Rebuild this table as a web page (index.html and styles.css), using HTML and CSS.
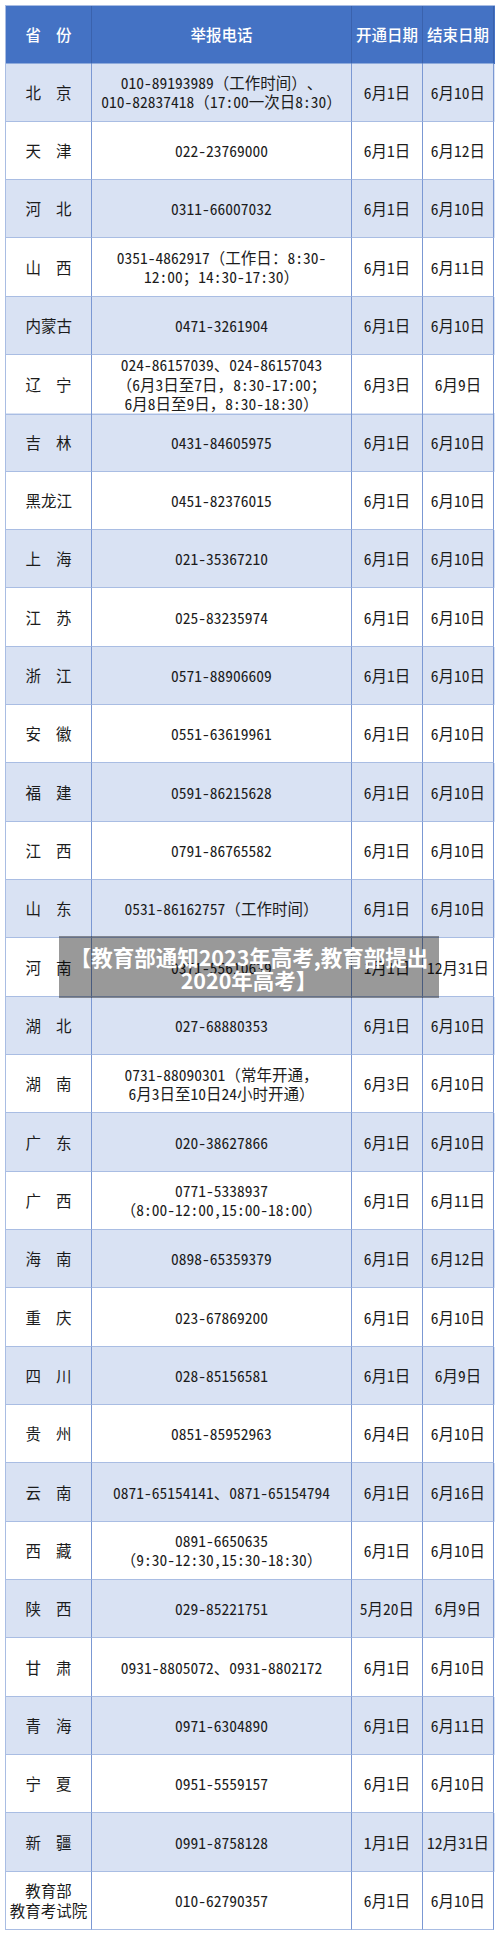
FILE: index.html
```html
<!DOCTYPE html>
<html lang="zh-CN">
<head>
<meta charset="utf-8">
<title>举报电话</title>
<link rel="stylesheet" href="styles.css">
</head>
<body>
<div class="page">
  <div class="table">
    <div class="row head">
      <div class="cell"><span class="pv"><i>省</i><i>份</i></span></div>
      <div class="cell">举报电话</div>
      <div class="cell">开通日期</div>
      <div class="cell">结束日期</div>
    </div>
    <div class="row alt">
      <div class="cell"><span class="pv"><i>北</i><i>京</i></span></div>
      <div class="cell"><span class="t">010-89193989<b>（</b>工作时间<b>）</b>、<br>010-82837418<b>（</b>17:00一次日8:30<b>）</b></span></div>
      <div class="cell">6月1日</div>
      <div class="cell">6月10日</div>
    </div>
    <div class="row">
      <div class="cell"><span class="pv"><i>天</i><i>津</i></span></div>
      <div class="cell">022-23769000</div>
      <div class="cell">6月1日</div>
      <div class="cell">6月12日</div>
    </div>
    <div class="row alt">
      <div class="cell"><span class="pv"><i>河</i><i>北</i></span></div>
      <div class="cell">0311-66007032</div>
      <div class="cell">6月1日</div>
      <div class="cell">6月10日</div>
    </div>
    <div class="row">
      <div class="cell"><span class="pv"><i>山</i><i>西</i></span></div>
      <div class="cell"><span class="t">0351-4862917<b>（</b>工作日<b>：</b>8:30-<br>12:00<b>；</b>14:30-17:30<b>）</b></span></div>
      <div class="cell">6月1日</div>
      <div class="cell">6月11日</div>
    </div>
    <div class="row alt">
      <div class="cell"><span class="pv"><i>内</i><i>蒙</i><i>古</i></span></div>
      <div class="cell">0471-3261904</div>
      <div class="cell">6月1日</div>
      <div class="cell">6月10日</div>
    </div>
    <div class="row">
      <div class="cell"><span class="pv"><i>辽</i><i>宁</i></span></div>
      <div class="cell"><span class="t tight">024-86157039、024-86157043<br><b>（</b>6月3日至7日<b>，</b>8:30-17:00<b>；</b><br>6月8日至9日<b>，</b>8:30-18:30<b>）</b></span></div>
      <div class="cell">6月3日</div>
      <div class="cell">6月9日</div>
    </div>
    <div class="row alt">
      <div class="cell"><span class="pv"><i>吉</i><i>林</i></span></div>
      <div class="cell">0431-84605975</div>
      <div class="cell">6月1日</div>
      <div class="cell">6月10日</div>
    </div>
    <div class="row">
      <div class="cell"><span class="pv"><i>黑</i><i>龙</i><i>江</i></span></div>
      <div class="cell">0451-82376015</div>
      <div class="cell">6月1日</div>
      <div class="cell">6月10日</div>
    </div>
    <div class="row alt">
      <div class="cell"><span class="pv"><i>上</i><i>海</i></span></div>
      <div class="cell">021-35367210</div>
      <div class="cell">6月1日</div>
      <div class="cell">6月10日</div>
    </div>
    <div class="row">
      <div class="cell"><span class="pv"><i>江</i><i>苏</i></span></div>
      <div class="cell">025-83235974</div>
      <div class="cell">6月1日</div>
      <div class="cell">6月10日</div>
    </div>
    <div class="row alt">
      <div class="cell"><span class="pv"><i>浙</i><i>江</i></span></div>
      <div class="cell">0571-88906609</div>
      <div class="cell">6月1日</div>
      <div class="cell">6月10日</div>
    </div>
    <div class="row">
      <div class="cell"><span class="pv"><i>安</i><i>徽</i></span></div>
      <div class="cell">0551-63619961</div>
      <div class="cell">6月1日</div>
      <div class="cell">6月10日</div>
    </div>
    <div class="row alt">
      <div class="cell"><span class="pv"><i>福</i><i>建</i></span></div>
      <div class="cell">0591-86215628</div>
      <div class="cell">6月1日</div>
      <div class="cell">6月10日</div>
    </div>
    <div class="row">
      <div class="cell"><span class="pv"><i>江</i><i>西</i></span></div>
      <div class="cell">0791-86765582</div>
      <div class="cell">6月1日</div>
      <div class="cell">6月10日</div>
    </div>
    <div class="row alt">
      <div class="cell"><span class="pv"><i>山</i><i>东</i></span></div>
      <div class="cell"><span class="t">0531-86162757<b>（</b>工作时间<b>）</b></span></div>
      <div class="cell">6月1日</div>
      <div class="cell">6月10日</div>
    </div>
    <div class="row">
      <div class="cell"><span class="pv"><i>河</i><i>南</i></span></div>
      <div class="cell">0371-55610639</div>
      <div class="cell">1月1日</div>
      <div class="cell">12月31日</div>
    </div>
    <div class="row alt">
      <div class="cell"><span class="pv"><i>湖</i><i>北</i></span></div>
      <div class="cell">027-68880353</div>
      <div class="cell">6月1日</div>
      <div class="cell">6月10日</div>
    </div>
    <div class="row">
      <div class="cell"><span class="pv"><i>湖</i><i>南</i></span></div>
      <div class="cell"><span class="t">0731-88090301<b>（</b>常年开通<b>，</b><br>6月3日至10日24小时开通<b>）</b></span></div>
      <div class="cell">6月3日</div>
      <div class="cell">6月10日</div>
    </div>
    <div class="row alt">
      <div class="cell"><span class="pv"><i>广</i><i>东</i></span></div>
      <div class="cell">020-38627866</div>
      <div class="cell">6月1日</div>
      <div class="cell">6月10日</div>
    </div>
    <div class="row">
      <div class="cell"><span class="pv"><i>广</i><i>西</i></span></div>
      <div class="cell"><span class="t">0771-5338937<br><b>（</b>8:00-12:00,15:00-18:00<b>）</b></span></div>
      <div class="cell">6月1日</div>
      <div class="cell">6月11日</div>
    </div>
    <div class="row alt">
      <div class="cell"><span class="pv"><i>海</i><i>南</i></span></div>
      <div class="cell">0898-65359379</div>
      <div class="cell">6月1日</div>
      <div class="cell">6月12日</div>
    </div>
    <div class="row">
      <div class="cell"><span class="pv"><i>重</i><i>庆</i></span></div>
      <div class="cell">023-67869200</div>
      <div class="cell">6月1日</div>
      <div class="cell">6月10日</div>
    </div>
    <div class="row alt">
      <div class="cell"><span class="pv"><i>四</i><i>川</i></span></div>
      <div class="cell">028-85156581</div>
      <div class="cell">6月1日</div>
      <div class="cell">6月9日</div>
    </div>
    <div class="row">
      <div class="cell"><span class="pv"><i>贵</i><i>州</i></span></div>
      <div class="cell">0851-85952963</div>
      <div class="cell">6月4日</div>
      <div class="cell">6月10日</div>
    </div>
    <div class="row alt">
      <div class="cell"><span class="pv"><i>云</i><i>南</i></span></div>
      <div class="cell">0871-65154141、0871-65154794</div>
      <div class="cell">6月1日</div>
      <div class="cell">6月16日</div>
    </div>
    <div class="row">
      <div class="cell"><span class="pv"><i>西</i><i>藏</i></span></div>
      <div class="cell"><span class="t">0891-6650635<br><b>（</b>9:30-12:30,15:30-18:30<b>）</b></span></div>
      <div class="cell">6月1日</div>
      <div class="cell">6月10日</div>
    </div>
    <div class="row alt">
      <div class="cell"><span class="pv"><i>陕</i><i>西</i></span></div>
      <div class="cell">029-85221751</div>
      <div class="cell">5月20日</div>
      <div class="cell">6月9日</div>
    </div>
    <div class="row">
      <div class="cell"><span class="pv"><i>甘</i><i>肃</i></span></div>
      <div class="cell">0931-8805072、0931-8802172</div>
      <div class="cell">6月1日</div>
      <div class="cell">6月10日</div>
    </div>
    <div class="row alt">
      <div class="cell"><span class="pv"><i>青</i><i>海</i></span></div>
      <div class="cell">0971-6304890</div>
      <div class="cell">6月1日</div>
      <div class="cell">6月11日</div>
    </div>
    <div class="row">
      <div class="cell"><span class="pv"><i>宁</i><i>夏</i></span></div>
      <div class="cell">0951-5559157</div>
      <div class="cell">6月1日</div>
      <div class="cell">6月10日</div>
    </div>
    <div class="row alt">
      <div class="cell"><span class="pv"><i>新</i><i>疆</i></span></div>
      <div class="cell">0991-8758128</div>
      <div class="cell">1月1日</div>
      <div class="cell">12月31日</div>
    </div>
    <div class="row">
      <div class="cell"><span class="t org">教育部<br>教育考试院</span></div>
      <div class="cell">010-62790357</div>
      <div class="cell">6月1日</div>
      <div class="cell">6月10日</div>
    </div>
  </div>
  <div class="overlay">【教育部通知2023年高考,教育部提出<br>2020年高考】</div>
</div>
</body>
</html>
```
FILE: styles.css
```css
html, body {
  margin: 0;
  padding: 0;
  background: #ffffff;
}
body {
  font-family: "Noto Sans CJK SC", "Noto Sans", sans-serif;
  color: #1c1c1c;
  text-spacing-trim: space-all;
}
.page {
  position: relative;
  width: 500px;
  height: 1936px;
  padding: 5px 0 0 5px;
  box-sizing: border-box;
}
.table {
  width: 490px;
  border-top: 1px solid #a9bde3;
  border-left: 1px solid #a9bde3;
  box-sizing: border-box;
}
.row {
  display: grid;
  grid-template-columns: 86px 260px 71px 71px;
  height: 58.33px;
  background: #ffffff;
}
.row.alt {
  background: #d9e2f3;
}
.row.head {
  background: #4472c4;
  color: #ffffff;
  font-weight: 500;
  height: 57.5px;
}
.cell {
  display: flex;
  align-items: center;
  justify-content: center;
  text-align: center;
  border-right: 1px solid #7b98d3;
  border-bottom: 1px solid #a9bde3;
  font-size: 15.5px;
  line-height: 19px;
  white-space: nowrap;
  font-feature-settings: "hwid" 1;
}
.t {
  display: block;
}
.cell b {
  font-weight: inherit;
  font-feature-settings: normal;
}
.tight {
  line-height: 19.5px;
}
.row.head .cell {
  border-right-color: #3a62ad;
  border-bottom-color: #8eaadb;
}
.pv {
  display: flex;
  justify-content: space-between;
  width: 46px;
}
.pv i {
  font-style: normal;
}
.org {
  line-height: 20px;
}
.overlay {
  position: absolute;
  left: 59px;
  top: 936px;
  width: 380px;
  height: 62px;
  box-sizing: border-box;
  padding-top: 9px;
  background: rgba(0, 0, 0, 0.4);
  color: #ffffff;
  font-size: 21.5px;
  font-weight: 700;
  line-height: 23px;
  text-align: center;
  white-space: nowrap;
}
```
